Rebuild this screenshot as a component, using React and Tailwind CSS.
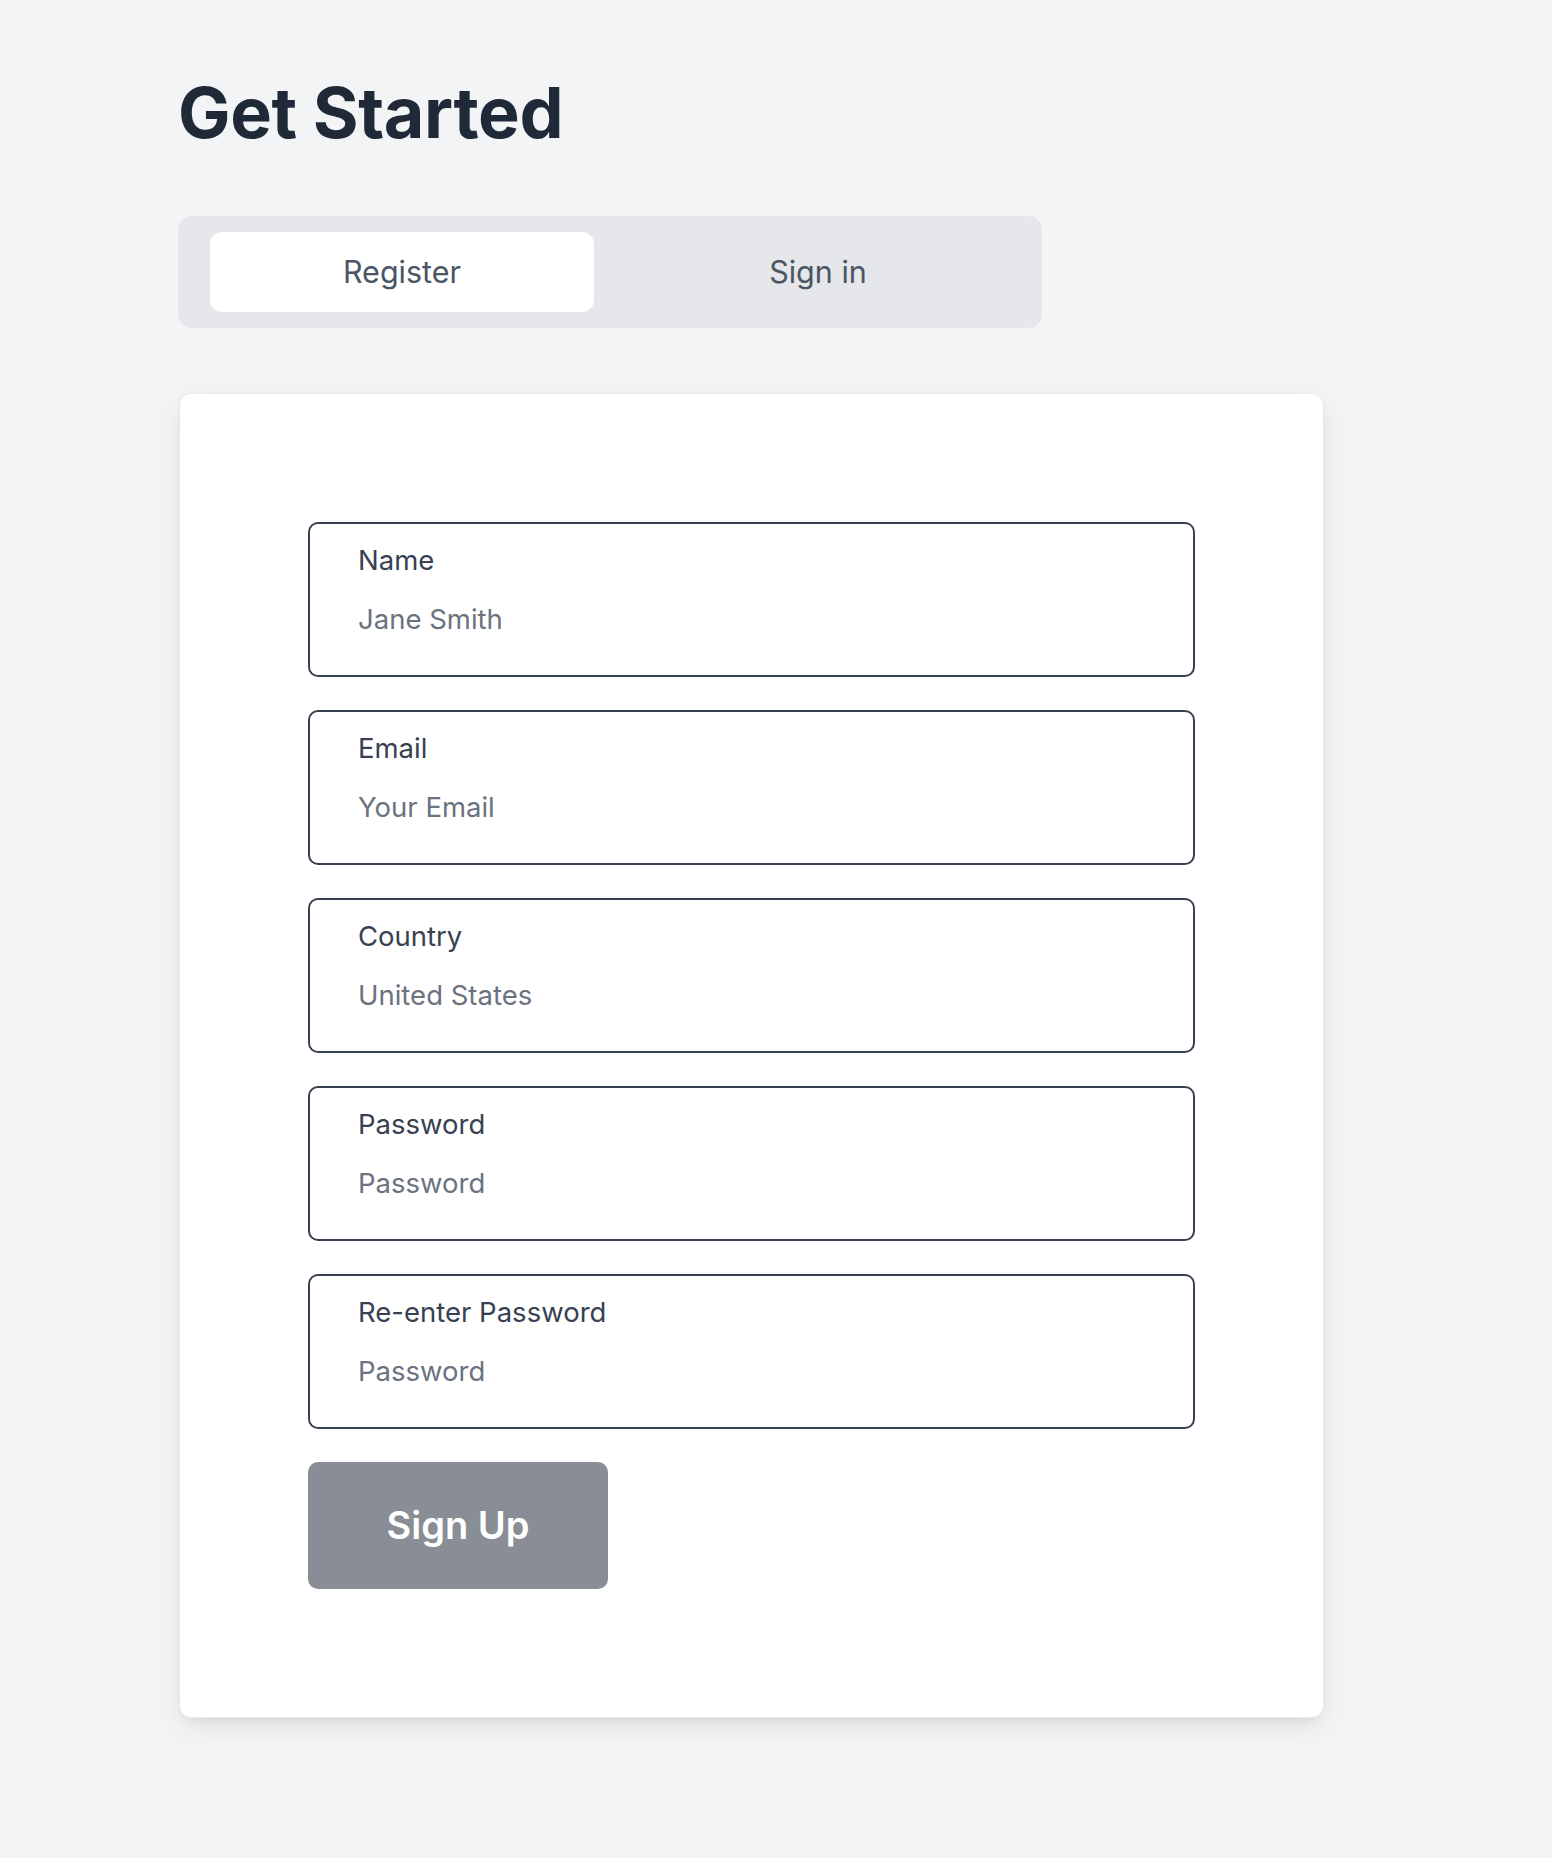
import { useState } from 'react'

const FIELDS = [
  { id: 'name', label: 'Name', placeholder: 'Jane Smith', type: 'text' },
  { id: 'email', label: 'Email', placeholder: 'Your Email', type: 'email' },
  { id: 'country', label: 'Country', placeholder: 'United States', type: 'text' },
  { id: 'password', label: 'Password', placeholder: 'Password', type: 'password' },
  { id: 'confirm', label: 'Re-enter Password', placeholder: 'Password', type: 'password' },
]

function Field({ id, label, placeholder, type }) {
  return (
    <label
      htmlFor={id}
      className="block h-[155px] rounded-[10px] border-2 border-[#374151] bg-white px-12 pt-4"
    >
      <span className="block text-[27.5px] leading-[40px] font-normal text-[#374151]">{label}</span>
      <input
        id={id}
        type={type === 'password' ? 'text' : type}
        placeholder={placeholder}
        className="mt-[19px] block h-[40px] w-full bg-transparent text-[27.5px] leading-[40px] text-gray-700 outline-none placeholder:text-[#6b7280]"
      />
    </label>
  )
}

export default function App() {
  const [tab, setTab] = useState('register')

  return (
    <div className="min-h-[1858px] bg-[#f3f4f6] pl-[178px] pt-[78px] pb-[140px] font-['Inter',sans-serif]">
      <h1 className="text-[70px] leading-[70px] font-bold tracking-[-0.4px] text-[#1f2937]">Get Started</h1>

      <div className="mt-[68px] grid h-[112px] w-[864px] grid-cols-2 gap-8 rounded-[14px] bg-[#e5e7eb] px-8 py-4">
        {[
          ['register', 'Register'],
          ['signin', 'Sign in'],
        ].map(([key, text]) => (
          <button
            key={key}
            onClick={() => setTab(key)}
            className={`rounded-[12px] text-[30.5px] text-[#4b5563] ${tab === key ? 'bg-white' : ''}`}
          >
            {text}
          </button>
        ))}
      </div>

      <div className="ml-[1px] mt-[65px] w-[1145px] rounded-[12px] border border-[#e5e7eb] bg-white p-32 shadow-[0_10px_30px_-4px_rgba(0,0,0,0.10),0_6px_12px_-6px_rgba(0,0,0,0.08)]">
        <div className="flex flex-col gap-[33px]">
          {FIELDS.map((f) => (
            <Field key={f.id} {...f} />
          ))}
        </div>
        <button className="mt-[33px] h-[127px] w-[300px] rounded-[10px] bg-[#898d96] text-[38px] font-semibold text-white">
          Sign Up
        </button>
      </div>
    </div>
  )
}
